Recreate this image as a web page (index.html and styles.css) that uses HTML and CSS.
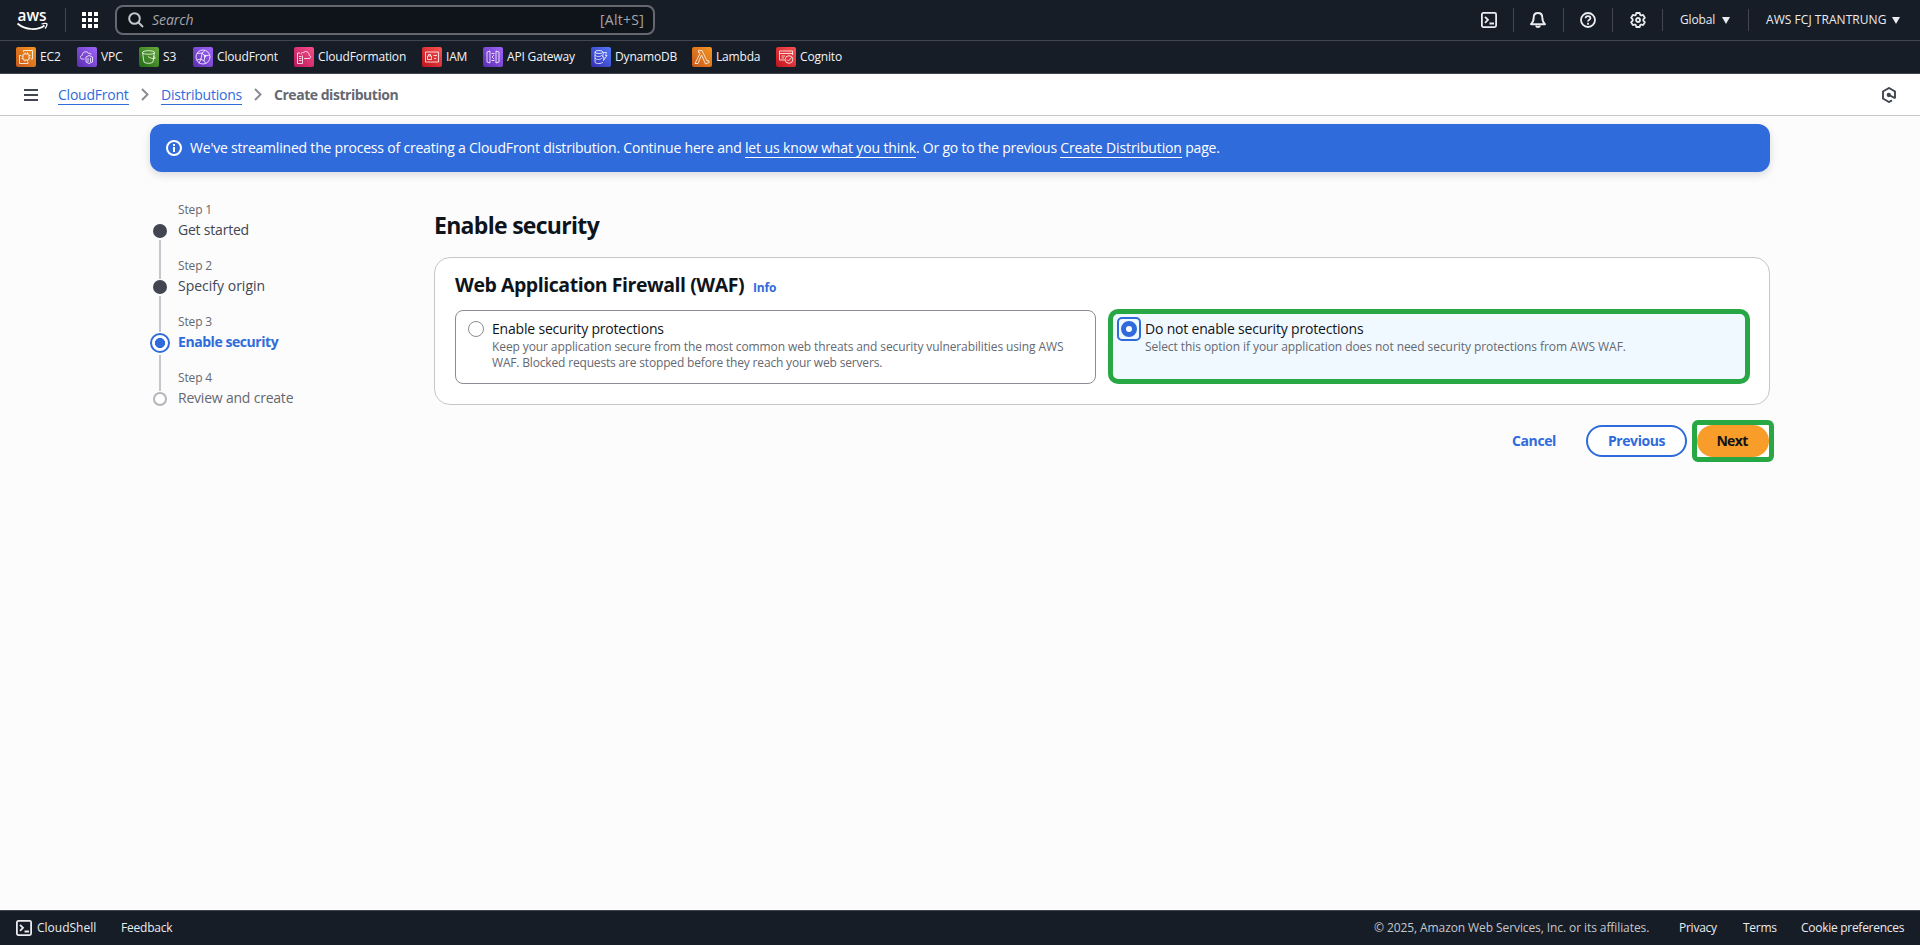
FILE: index.html
```
<!DOCTYPE html>
<html lang="en">
<head>
<meta charset="utf-8">
<title>Create distribution | CloudFront</title>
<link rel="stylesheet" href="styles.css">
</head>
<body>
<header class="topnav">
  <svg class="logo" width="32" height="32" viewBox="0 -10 32 32"><text x="0.5" y="11" textLength="29" lengthAdjust="spacingAndGlyphs" class="logo-text">aws</text><path d="M.5 13.500C8.500 20.500 21 20.500 27.500 15.500" fill="none" stroke="#fff" stroke-width="1.700"/><path d="M24.500 14C28 13 30.500 13.200 30 14.500C29.800 16 29 17.500 28 18.500" fill="none" stroke="#fff" stroke-width="1.300"/></svg>
  <span class="divider logo-divider"></span>
  <svg class="apps" width="16" height="16" viewBox="0 0 16 16" fill="#fff"><path d="M0 0h4v4H0zM6 0h4v4H6zM12 0h4v4h-4zM0 6h4v4H0zM6 6h4v4H6zM12 6h4v4h-4zM0 12h4v4H0zM6 12h4v4H6zM12 12h4v4h-4z"/></svg>
  <div class="search">
    <svg width="16" height="16" viewBox="0 0 16 16" fill="none" stroke="#c6c6cd" stroke-width="2"><circle cx="6.500" cy="6.500" r="5.300"/><path d="M10.500 10.500l4.500 4.500"/></svg>
    <span class="search-hint">Search</span><span class="shortcut">[Alt+S]</span>
  </div>
  <nav class="tools">
    <span class="tool tool-shell"><svg width="16" height="16" viewBox="0 0 16 16" fill="none" stroke="#ebebf0" stroke-width="1.800"><rect x=".9" y=".9" width="14.200" height="14.200" rx="1.500"/><path d="M4 4.800l3 3-3 3M8.500 11.500H13"/></svg></span>
    <span class="tool tool-bell"><svg width="16" height="16" viewBox="0 0 16 16" fill="none" stroke="#ebebf0" stroke-width="1.900" stroke-linejoin="round"><path d="M8 1C5.300 1 3.700 3 3.700 5.500C3.700 9 2.800 10.500 1 12.200H15C13.200 10.500 12.300 9 12.300 5.500C12.300 3 10.700 1 8 1z"/><path d="M6 13.500C6.500 15.500 9.500 15.500 10 13.500"/></svg></span>
    <span class="tool tool-help"><svg width="16" height="16" viewBox="0 0 16 16" fill="none" stroke="#ebebf0" stroke-width="1.800"><circle cx="8" cy="8" r="7"/><path d="M5.600 6.300C5.600 3.300 10.400 3.300 10.400 6.200C10.400 7.900 8 7.700 8 9.600M8 10.800v1.900"/></svg></span>
    <span class="tool"><svg width="16" height="16" viewBox="0 0 16 16" fill="none" stroke="#ebebf0" stroke-width="1.800" stroke-linejoin="round"><path d="M6.300 1h3.400l.5 2 .9.500 2-.6 1.700 2.900-1.500 1.500v1.400l1.500 1.500-1.700 2.900-2-.6-.9.500-.5 2H6.300l-.5-2-.9-.5-2 .6-1.700-2.900 1.500-1.500V7.300L1.200 5.800l1.700-2.900 2 .6.900-.5z"/><circle cx="8" cy="8" r="2"/></svg></span>
    <span class="region">Global<i class="caret"></i></span>
    <span class="account">AWS FCJ TRANTRUNG<i class="caret"></i></span>
  </nav>
</header>

<nav class="services">
  <a class="service"><svg class="tile orange" viewBox="0 0 20 20"><rect x="7" y="7" width="6" height="6" rx="1"/><path d="M7.500 5V3.500h9V12H15M5 8.500H3.500v8H12V15M9 5.500V7M11.500 5.500V7M9 13v1.500M11.500 13v1.500M5.500 9H7M5.500 11.500H7M13 8.500h1.500M13 11h1.500"/></svg>EC2</a>
  <a class="service"><svg class="tile purple" viewBox="0 0 20 20"><path d="M7.500 12H5C2.500 12 3 8.500 5.200 8.500C5 4.500 10.500 3.500 11.500 6.500C13 5.500 14 6.500 14 7.800"/><path d="M9 10l3-1.500L15.500 10v5L12 16.500 9 15zM11 11v4M13.500 11v4"/></svg>VPC</a>
  <a class="service"><svg class="tile green" viewBox="0 0 20 20"><ellipse cx="9.500" cy="5.500" rx="6" ry="1.800"/><path d="M3.500 5.500l1.500 9.500c1.500 1.800 7.500 1.800 9 0l1.500-9.500M9 9.500c2 1.500 5 2.500 7 2 .8-.8-.5-2-2-2.500"/></svg>S3</a>
  <a class="service"><svg class="tile purple" viewBox="0 0 20 20"><circle cx="10" cy="10" r="7"/><path d="M4 6.500l5-.5 3 3-1 5 2 2.500M9 6l3-2.500M12 9l4.500-1M9 6l-1 6 3 2M8 12l-4.500 1M6 16.500L8 12"/><circle cx="12" cy="9" r="1"/></svg>CloudFront</a>
  <a class="service"><svg class="tile pink" viewBox="0 0 20 20"><path d="M8.500 8.500V16.500h-5V6H6M5 9.500h2.500M5 11.500h2.500M5 13.500h2.500M10 11.500h5c2.500 0 2-3 .2-3C15.500 5 11 3 9.500 5.800C7.800 5 7 6 7 7.500"/></svg>CloudFormation</a>
  <a class="service"><svg class="tile red" viewBox="0 0 20 20"><path d="M3.500 5h13v10h-13zM5.500 9h4v3.500h-4zM6.500 9V7.500h2V9M11.500 8.500h3.500M12 11.500h2"/></svg>IAM</a>
  <a class="service"><svg class="tile purple" viewBox="0 0 20 20"><path d="M4 5l3-1v12l-3-1zM16 5l-3-1v12l3-1zM8.500 6.500h3M11 8l-2 2 2 2M8.500 13.500h3"/></svg>API Gateway</a>
  <a class="service"><svg class="tile blue" viewBox="0 0 20 20"><ellipse cx="8" cy="5" rx="4" ry="1.500"/><path d="M4 5v10c0 2 7 2 8 0M4 8c1 2 6 2 7 0M4 11c1 2 6 2 7 0M12.500 5.500h3l-1 3H16l-3.500 5 .5-3.500h-1.500z"/></svg>DynamoDB</a>
  <a class="service"><svg class="tile orange" viewBox="0 0 20 20"><path d="M6.500 3.500H10l5 10.500 1.500-.5.700 2L13.500 17 9.500 8 6 16.500H3l5-10-.5-1h-1z"/></svg>Lambda</a>
  <a class="service"><svg class="tile red" viewBox="0 0 20 20"><path d="M16.500 8V4h-13v9H9M3.500 6.500h13M5.500 9H9M5.500 11H8"/><circle cx="13" cy="12.500" r="3.800"/><path d="M11 12.500l1.500 1.500 3-3.500"/></svg>Cognito</a>
</nav>

<div class="crumbs">
  <svg class="menu" width="14" height="12" viewBox="0 0 14 12" fill="#424650"><path d="M0 0h14v2H0zM0 5h14v2H0zM0 10h14v2H0z"/></svg>
  <a class="crumb c1">CloudFront</a>
  <svg class="chev" width="8" height="13" viewBox="0 0 8 13"><path d="M1 1l5.500 5.500L1 12"/></svg>
  <a class="crumb c2">Distributions</a>
  <svg class="chev" width="8" height="13" viewBox="0 0 8 13"><path d="M1 1l5.500 5.500L1 12"/></svg>
  <span class="crumb-current">Create distribution</span>
  <svg class="hex" width="16" height="16" viewBox="0 0 16 16" fill="none" stroke="#424650" stroke-width="1.900"><path d="M14 11.500V4.500L8 1 2 4.500v7L8 15l3-1.700M8 8l6 3.200"/><circle cx="7.800" cy="8" r="1.200" fill="#424650"/></svg>
</div>

<main class="page">
  <div class="flash">
    <svg width="16" height="16" viewBox="0 0 16 16" fill="none" stroke="#fff" stroke-width="2"><circle cx="8" cy="8" r="7"/><path d="M8 7v5M8 4v2"/></svg>
    <p class="flash-text">We've streamlined the process of creating a CloudFront distribution. Continue here and <a class="flash-link">let us know what you think</a>. Or go to the previous <a class="flash-link">Create Distribution</a> page.</p>
  </div>
  <div class="wizard">
    <ol class="steps">
      <li class="step done"><span class="marker"><i class="dot"></i></span><span class="step-no">Step 1</span><span class="step-name">Get started</span></li>
      <li class="step done"><span class="marker"><i class="dot"></i></span><span class="step-no">Step 2</span><span class="step-name origin">Specify origin</span></li>
      <li class="step active"><span class="marker"><i class="dot"></i></span><span class="step-no">Step 3</span><span class="step-name">Enable security</span></li>
      <li class="step todo"><span class="marker"><i class="dot"></i></span><span class="step-no">Step 4</span><span class="step-name">Review and create</span></li>
    </ol>
    <section class="content">
      <h1 class="title">Enable security</h1>
      <div class="card">
        <div class="card-head"><h2 class="card-title">Web Application Firewall (WAF)</h2><a class="info">Info</a></div>
        <div class="options">
          <div class="option">
            <i class="radio"></i>
            <div><div class="option-name">Enable security protections</div><div class="option-desc"><span class="desc-lead">Keep your application secure from the most common web threats and security vulnerabilities using AWS</span><br>WAF. Blocked requests are stopped before they reach your web servers.</div></div>
          </div>
          <div class="option selected">
            <i class="radio"></i>
            <div><div class="option-name">Do not enable security protections</div><div class="option-desc">Select this option if your application does not need security protections from AWS WAF.</div></div>
          </div>
        </div>
      </div>
      <div class="actions">
        <a class="cancel">Cancel</a>
        <a class="previous">Previous</a>
        <span class="next-frame"><a class="next">Next</a></span>
      </div>
    </section>
  </div>
</main>

<footer class="footer">
  <svg width="16" height="16" viewBox="0 0 16 16" fill="none" stroke="#ebebf0" stroke-width="1.800"><rect x=".9" y=".9" width="14.200" height="14.200" rx="1.500"/><path d="M4 4.800l3 3-3 3M8.500 11.500H13"/></svg>
  <a class="shell">CloudShell</a><a class="feedback">Feedback</a>
  <span class="copyright">© 2025, Amazon Web Services, Inc. or its affiliates.</span>
  <a class="privacy">Privacy</a><a class="terms">Terms</a><a class="cookies">Cookie preferences</a>
</footer>
</body>
</html>
```
FILE: styles.css
```
* { box-sizing: border-box; }
body {
  margin: 0; height: 945px; display: flex; flex-direction: column; overflow: hidden;
  background: #fcfcfd; color: #0f141a;
  font: 400 14px/20px "Open Sans", "Noto Sans", sans-serif;
}
svg { display: block; flex: none; }
h1, h2, p, ol { margin: 0; padding: 0; }
a, span { white-space: nowrap; }

.topnav { height: 41px; flex: none; display: flex; align-items: center; padding-left: 17px; background: #161d26; border-bottom: 1px solid #424650; }
.logo { margin-top: -8px; overflow: visible; }
.logo-text { font: 600 17px "Open Sans", sans-serif; fill: #fff; }
.divider { width: 1px; height: 24px; background: #424650; }
.logo-divider { margin: 0 16px; }
.search { width: 540px; height: 30px; margin-left: 17px; padding: 0 9px 0 11px; display: flex; align-items: center; background: #0f141a; border: 2px solid #656871; border-radius: 8px; color: #a4a4ad; }
.search-hint { margin-left: 8px; font-style: italic; font-size: 14px; letter-spacing: -.05px; }
.shortcut { margin-left: auto; letter-spacing: .25px; }
.tools { margin-left: auto; display: flex; align-items: center; color: #ebebf0; font: 500 12px/20px "Open Sans", sans-serif; }
.tool { width: 50px; height: 24px; padding-left: 17px; display: flex; align-items: center; border-left: 1px solid #424650; }
.tool-bell { padding-left: 16px; }
.tool-help { width: 49px; padding-left: 16px; }
.tool-shell { width: 49px; border-left: 0; }
.region, .account { height: 22px; display: flex; align-items: center; border-left: 1px solid #424650; padding-left: 17px; letter-spacing: -.15px; }
.region { width: 86px; }
.account { width: 172px; letter-spacing: .05px; }
.caret { margin-left: 7px; border: 4px solid transparent; border-top: 7px solid #ebebf0; border-bottom: 0; }
.account .caret { margin-left: 6px; }

.services { height: 33px; flex: none; padding-left: 16px; display: grid; grid-template-columns: 61px 62px 54px 101px 128px 61px 108px 101px 84px 80px; align-items: center; background: #161d26; border-bottom: 1px solid #424650; }
.service { display: flex; align-items: center; gap: 4px; color: #f3f3f7; font-weight: 500; font-size: 12px; letter-spacing: -.17px; }
.tile { width: 20px; height: 20px; border-radius: 2px; fill: none; stroke: rgba(255,255,255,.88); stroke-width: .9; stroke-linejoin: round; }
.orange { background: linear-gradient(45deg, #c8581b, #f59622); }
.purple { background: linear-gradient(45deg, #5a2db0, #a065fa); }
.green { background: linear-gradient(45deg, #216b15, #69aa3d); }
.pink { background: linear-gradient(45deg, #b81859, #f84e8a); }
.red { background: linear-gradient(45deg, #bd141f, #fb5252); }
.blue { background: linear-gradient(45deg, #352db2, #527bfb); }

.crumbs { height: 42px; flex: none; padding: 0 23px 0 24px; display: flex; align-items: center; background: #fff; border-bottom: 1px solid #c6c6cd; }
.crumb { color: #2f6bdb; border-bottom: 1px solid #2f6bdb; line-height: 18px; height: 19px; margin-top: 1px; letter-spacing: -.23px; }
.c1 { width: 71px; margin-left: 20px; }
.c2 { width: 81px; }
.chev { margin: 0 12px; fill: none; stroke: #8c8c94; stroke-width: 2; }
.crumb-current { color: #656871; font-weight: 700; letter-spacing: -.47px; }
.hex { margin-left: auto; }

.page { flex: 1; padding: 8px 150px 0; }
.flash { height: 48px; padding: 0 16px; display: flex; align-items: center; gap: 8px; color: #fff; background: #2f6bdb; border-radius: 12px; box-shadow: 0 3px 8px rgba(0,7,22,.14); }
.flash-text { font-weight: 500; letter-spacing: -.205px; white-space: nowrap; }
.flash-link { display: inline-block; line-height: 18px; border-bottom: 1px solid #fff; letter-spacing: -.13px; }

.wizard { display: flex; padding-top: 28px; }
.steps { width: 284px; flex: none; list-style: none; }
.step { height: 56px; display: grid; grid-template-columns: 20px 1fr; grid-template-rows: 20px 20px; column-gap: 8px; }
.marker { grid-row: 1 / 3; height: 56px; padding-top: 24px; display: flex; flex-direction: column; align-items: center; }
.marker::after { content: ""; width: 2px; height: 39px; flex: none; margin-top: 2px; background: #c6c6cd; }
.todo .marker::after { display: none; }
.dot { width: 14px; height: 14px; flex: none; border-radius: 50%; background: #424650; }
.done:nth-child(2) .marker::after { height: 36px; }
.active .marker { padding-top: 21px; }
.active .dot { width: 20px; height: 20px; border: 2px solid #2f6bdb; background: radial-gradient(circle, #2f6bdb 4.8px, #fff 5.3px); }
.active .marker::after { height: 36px; }
.todo .dot { background: #fff; border: 2px solid #b4b4bb; }
.step-no { color: #656871; font-size: 12px; letter-spacing: -.15px; }
.step-name { color: #424650; letter-spacing: -.21px; }
.origin { letter-spacing: 0; }
.active .step-name { color: #2f6bdb; font-weight: 700; letter-spacing: -.44px; }
.todo .step-name { color: #656871; }

.content { flex: 1; min-width: 0; }
.title { margin-top: 10px; font: 700 23px/30px "Open Sans", sans-serif; letter-spacing: -.7px; }
.card { height: 148px; margin-top: 17px; padding: 15px 20px; background: #fff; border: 1px solid #c6c6cd; border-radius: 16px; }
.card-head { display: flex; align-items: baseline; height: 24px; gap: 8px; }
.card-title { font: 700 19.5px/24px "Open Sans", sans-serif; letter-spacing: -.45px; width: 290px; white-space: nowrap; }
.info { color: #2f6bdb; font-weight: 700; font-size: 12px; letter-spacing: -.2px; }
.options { display: grid; grid-template-columns: 641px 642px; gap: 12px; margin-top: 13px; }
.option { height: 74px; display: flex; gap: 8px; padding: 8px 12px; border: 1px solid #8c8c94; border-radius: 8px; }
.option-name { letter-spacing: -.19px; }
.option-desc { color: #656871; font-size: 12px; line-height: 16px; letter-spacing: -.17px; white-space: nowrap; }
.desc-lead { letter-spacing: -.105px; }
.radio { width: 16px; height: 16px; margin-top: 2px; flex: none; border: 1px solid #8c8c94; border-radius: 50%; }
.selected { height: 75px; margin-top: -1px; padding: 5px 8px; border: 5px solid #28a745; background: #f0f9ff; border-radius: 10px; }
.selected .option-desc { letter-spacing: -.07px; }
.selected .radio { position: relative; border: 5px solid #2f6bdb; background: #fff; }
.selected .radio::after { content: ""; position: absolute; inset: -9px; border: 2px solid #2f6bdb; border-radius: 5px; }
.actions { display: flex; justify-content: flex-end; align-items: center; margin: 15px -4px 0 0; font-weight: 700; }
.cancel { color: #2f6bdb; margin-right: 30px; letter-spacing: -.38px; }
.previous { width: 101px; height: 32px; line-height: 28px; text-align: center; color: #2f6bdb; background: #fff; border: 2px solid #2f6bdb; border-radius: 16px; letter-spacing: -.42px; }
.next-frame { width: 82px; height: 42px; margin-left: 5px; border: 5px solid #28a745; border-radius: 6px; background: #fff; }
.next { display: block; height: 32px; line-height: 32px; padding-right: 2px; text-align: center; background: #f89c2a; border-radius: 16px; letter-spacing: -.65px; }

.footer { height: 35px; flex: none; padding: 0 16px; display: flex; align-items: center; background: #161d26; border-top: 1px solid #424650; color: #ebebf0; font-size: 12px; font-weight: 500; }
.shell { margin-left: 5px; width: 84px; }
.feedback { letter-spacing: -.2px; }
.copyright { margin-left: auto; width: 275px; color: #c6c6cd; font-weight: 400; letter-spacing: -.09px; }
.privacy { width: 64px; margin-left: 30px; letter-spacing: -.25px; }
.terms { width: 58px; letter-spacing: -.25px; }
.cookies { width: 103px; letter-spacing: -.28px; }
```
